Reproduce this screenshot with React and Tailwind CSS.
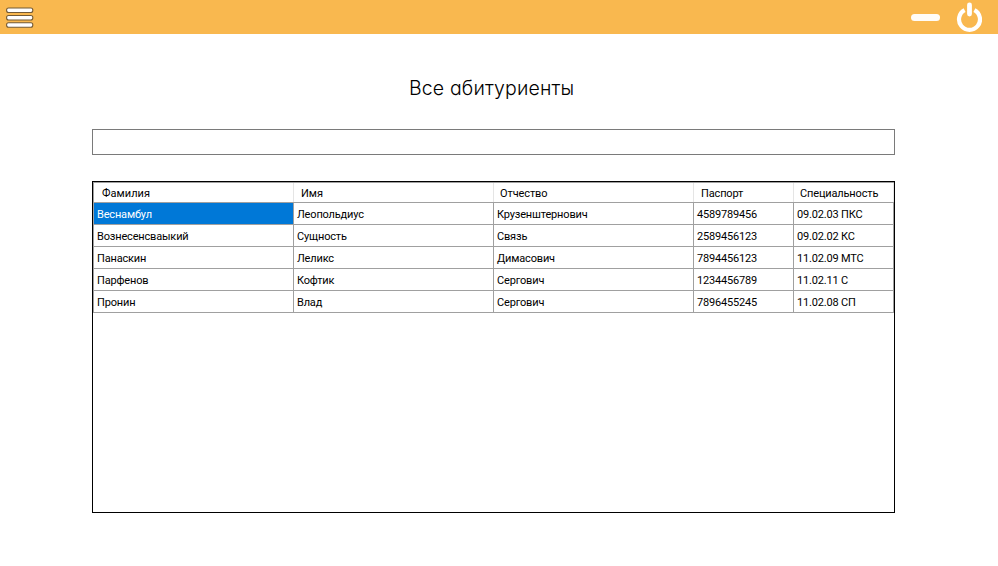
const columns = [
  { title: 'Фамилия', width: 'w-[200px]', pad: 'pl-[8px]', tracking: 'tracking-[0.05px]' },
  { title: 'Имя', width: 'w-[200px]', pad: 'pl-[7px]', tracking: 'tracking-[0px]' },
  { title: 'Отчество', width: 'w-[200px]', pad: 'pl-[6px]', tracking: 'tracking-[-0.1px]' },
  { title: 'Паспорт', width: 'w-[100px]', pad: 'pl-[7px]', tracking: 'tracking-[-0.15px]' },
  { title: 'Специальность', width: 'w-[100px]', pad: 'pl-[6px]', tracking: 'tracking-[-0.15px]' },
];

const rows = [
  ['Веснамбул', 'Леопольдиус', 'Крузенштернович', '4589789456', '09.02.03 ПКС'],
  ['Вознесенсваыкий', 'Сущность', 'Связь', '2589456123', '09.02.02 КС'],
  ['Панаскин', 'Леликс', 'Димасович', '7894456123', '11.02.09 МТС'],
  ['Парфенов', 'Кофтик', 'Сергович', '1234456789', '11.02.11 С'],
  ['Пронин', 'Влад', 'Сергович', '7896455245', '11.02.08 СП'],
];

function MenuIcon() {
  return (
    <svg width="28" height="22" viewBox="0 0 28 22">
      {[1, 8.5, 15.8].map((y) => (
        <rect key={y} x="0.6" y={y} width="26.2" height="4.5" rx="2" fill="#fff" stroke="#735a35" strokeWidth="1.1" />
      ))}
    </svg>
  );
}

function PowerIcon() {
  return (
    <svg width="26" height="30" viewBox="0 0 26 30" fill="none" stroke="#fff">
      <path d="M8.6 8.1A10.5 10.5 0 1 0 18.4 8.1" strokeWidth="4.2" />
      <path d="M13.5 3V12" strokeWidth="4.8" strokeLinecap="round" />
    </svg>
  );
}

export default function App() {
  return (
    <div className="flex h-[566px] w-[998px] flex-col bg-white font-['Roboto','Liberation_Sans',sans-serif] text-black">
      <header className="flex h-[34px] shrink-0 items-start justify-between bg-[#f9b84f] pr-4 pl-[6px]">
        <button className="mt-[7px]" aria-label="Меню"><MenuIcon /></button>
        <div className="flex items-start gap-4">
          <button className="mt-[14px] h-[7px] w-[29px] rounded-full bg-[#fffcf8]" aria-label="Свернуть" />
          <button className="mt-[2px]" aria-label="Выход"><PowerIcon /></button>
        </div>
      </header>
      <h1 className="mt-[40px] ml-[409px] h-7 font-['Inter',sans-serif] text-[19.5px] leading-7 font-light tracking-[0.15px] whitespace-nowrap [font-feature-settings:'cv11']">
        Все абитуриенты
      </h1>
      <input className="mt-[27px] ml-[92px] h-[26px] w-[803px] shrink-0 border border-[#7a7a7a] px-1 outline-none" />
      <section className="mt-[26px] ml-[92px] h-[332px] w-[803px] shrink-0 border border-black text-[11px]">
        <div className="w-[801px] border-t border-l border-[#a0a0a0]">
          <div className="flex h-5 border-b border-[#a0a0a0]">
            {columns.map((c) => (
              <div key={c.title} className={`${c.width} ${c.pad} ${c.tracking} border-r border-[#e5e5e5] leading-[22px] whitespace-nowrap`}>
                {c.title}
              </div>
            ))}
          </div>
          {rows.map((row, r) => (
            <div key={row[0]} className="flex h-[22px] border-b border-[#a0a0a0]">
              {row.map((text, i) => (
                <div
                  key={columns[i].title}
                  className={`${columns[i].width} h-[21px] border-r border-[#a0a0a0] pl-[3px] leading-[24px] tracking-[-0.17px] whitespace-nowrap ${r === 0 && i === 0 ? 'bg-[#0078d7] text-white' : ''}`}
                >
                  {text}
                </div>
              ))}
            </div>
          ))}
        </div>
      </section>
    </div>
  );
}
